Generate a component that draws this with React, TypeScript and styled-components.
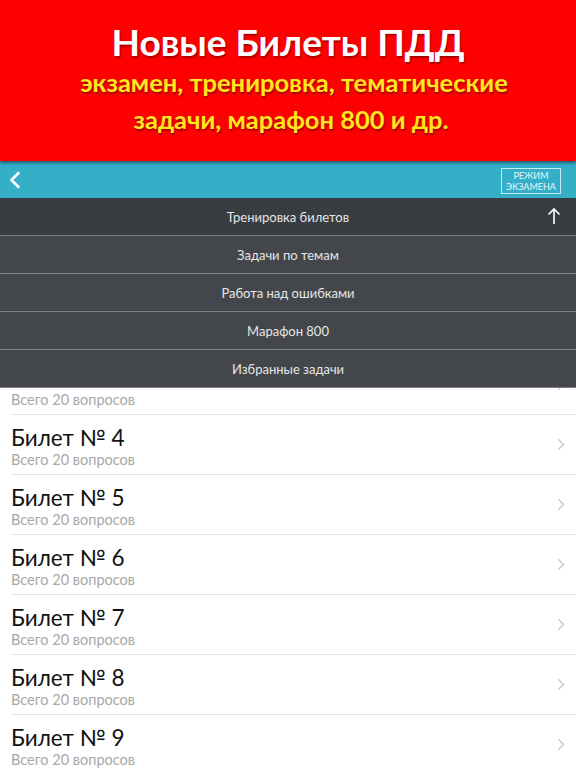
import React from "react";
import styled, { createGlobalStyle } from "styled-components";

const GlobalStyle = createGlobalStyle`
  html, body {
    margin: 0;
    padding: 0;
    background: #fff;
  }
  body {
    font-family: "Lato", "Noto Sans", sans-serif;
    width: 576px;
    height: 768px;
    overflow: hidden;
  }
`;

const Page = styled.div`
  width: 576px;
  height: 768px;
  display: flex;
  flex-direction: column;
  overflow: hidden;
`;

const Banner = styled.header`
  height: 161px;
  flex-shrink: 0;
  background-color: #fe0000;
  display: flex;
  flex-direction: column;
  align-items: center;
  padding-top: 20px;
  box-sizing: border-box;
  position: relative;
  z-index: 2;
  box-shadow: 0 2px 3px rgba(0, 0, 0, 0.45);
`;

const BannerTitle = styled.h1`
  margin: 0;
  color: #fff;
  font-size: 37px;
  font-weight: 700;
  line-height: 44px;
  text-shadow: 1px 2px 2px rgba(0, 0, 0, 0.35);
`;

const BannerLine = styled.p<{ $shift?: number }>`
  margin: 0;
  color: #ffe61e;
  font-size: 25.5px;
  font-weight: 700;
  line-height: 37px;
  text-shadow: 1px 2px 2px rgba(0, 0, 0, 0.35);
  padding-left: ${(p) => p.$shift ?? 0}px;
`;

const NavBar = styled.div`
  height: 37px;
  flex-shrink: 0;
  background-color: #35aec8;
  display: flex;
  align-items: center;
  justify-content: space-between;
  padding: 0 15px 0 9px;
`;

const BackButton = styled.button`
  background: transparent;
  border: none;
  padding: 0;
  display: flex;
  cursor: pointer;
`;

const ExamButton = styled.button`
  width: 60px;
  height: 26px;
  box-sizing: border-box;
  border: 1px solid #c6ebf3;
  background: transparent;
  color: #e9f7fa;
  font-family: "Lato", "Noto Sans", sans-serif;
  font-size: 9px;
  line-height: 11px;
  padding: 0;
  text-transform: uppercase;
  margin-top: 2px;
`;

const Body = styled.div`
  position: relative;
  flex: 1;
`;

const Menu = styled.nav`
  position: absolute;
  top: 0;
  left: 0;
  right: 0;
  z-index: 1;
  display: flex;
  flex-direction: column;
`;

const MenuItem = styled.div<{ $active?: boolean }>`
  height: 37px;
  border-bottom: 1px solid #7d8185;
  background-color: ${(p) => (p.$active ? "#393c40" : "#43474b")};
  color: #e6e6e6;
  font-size: 13px;
  display: flex;
  align-items: center;
  justify-content: center;
  position: relative;
`;

const UpArrow = styled.span`
  position: absolute;
  right: 15px;
  top: 9px;
  display: flex;
`;

const List = styled.ul`
  list-style: none;
  margin: 0;
  padding: 0;
  padding-top: 37px;
`;

const Row = styled.li`
  height: 60px;
  box-sizing: border-box;
  margin-left: 11px;
  padding-right: 11px;
  border-bottom: 1px solid #e2e2e2;
  display: flex;
  align-items: center;
  justify-content: space-between;
`;

const RowText = styled.div`
  display: flex;
  flex-direction: column;
  padding-top: 2px;
`;

const RowTitle = styled.span`
  font-size: 22.5px;
  color: #111;
  line-height: 27px;
`;

const RowSub = styled.span`
  font-size: 14.5px;
  color: #a8a8a8;
  line-height: 17px;
`;

const Chevron = () => (
  <svg width="8" height="13" viewBox="0 0 8 13">
    <path d="M1.5 1.5 L6.5 6.5 L1.5 11.5" fill="none" stroke="#c4c4c8" strokeWidth="1.4" />
  </svg>
);

const menuItems = [
  "Тренировка билетов",
  "Задачи по темам",
  "Работа над ошибками",
  "Марафон 800",
  "Избранные задачи",
];

const tickets = [1, 2, 3, 4, 5, 6, 7, 8, 9];

export default function App() {
  return (
    <Page>
      <GlobalStyle />
      <Banner>
        <BannerTitle>Новые Билеты ПДД</BannerTitle>
        <BannerLine $shift={12}>экзамен, тренировка, тематические</BannerLine>
        <BannerLine $shift={6}>задачи, марафон 800 и др.</BannerLine>
      </Banner>
      <NavBar>
        <BackButton>
          <svg width="12" height="18" viewBox="0 0 12 18">
            <path d="M9.5 2 L2.5 9 L9.5 16" fill="none" stroke="#fff" strokeWidth="2.6" strokeLinecap="round" strokeLinejoin="round" />
          </svg>
        </BackButton>
        <ExamButton>
          режим
          <br />
          экзамена
        </ExamButton>
      </NavBar>
      <Body>
        <Menu>
          {menuItems.map((item, i) => (
            <MenuItem key={item} $active={i === 0}>
              {item}
              {i === 0 && (
                <UpArrow>
                  <svg width="14" height="18" viewBox="0 0 14 18">
                    <path d="M7 17 V2 M1.5 7.5 L7 2 L12.5 7.5" fill="none" stroke="#fff" strokeWidth="1.6" />
                  </svg>
                </UpArrow>
              )}
            </MenuItem>
          ))}
        </Menu>
        <List>
          {tickets.map((n) => (
            <Row key={n}>
              <RowText>
                <RowTitle>Билет № {n}</RowTitle>
                <RowSub>Всего 20 вопросов</RowSub>
              </RowText>
              <Chevron />
            </Row>
          ))}
        </List>
      </Body>
    </Page>
  );
}
